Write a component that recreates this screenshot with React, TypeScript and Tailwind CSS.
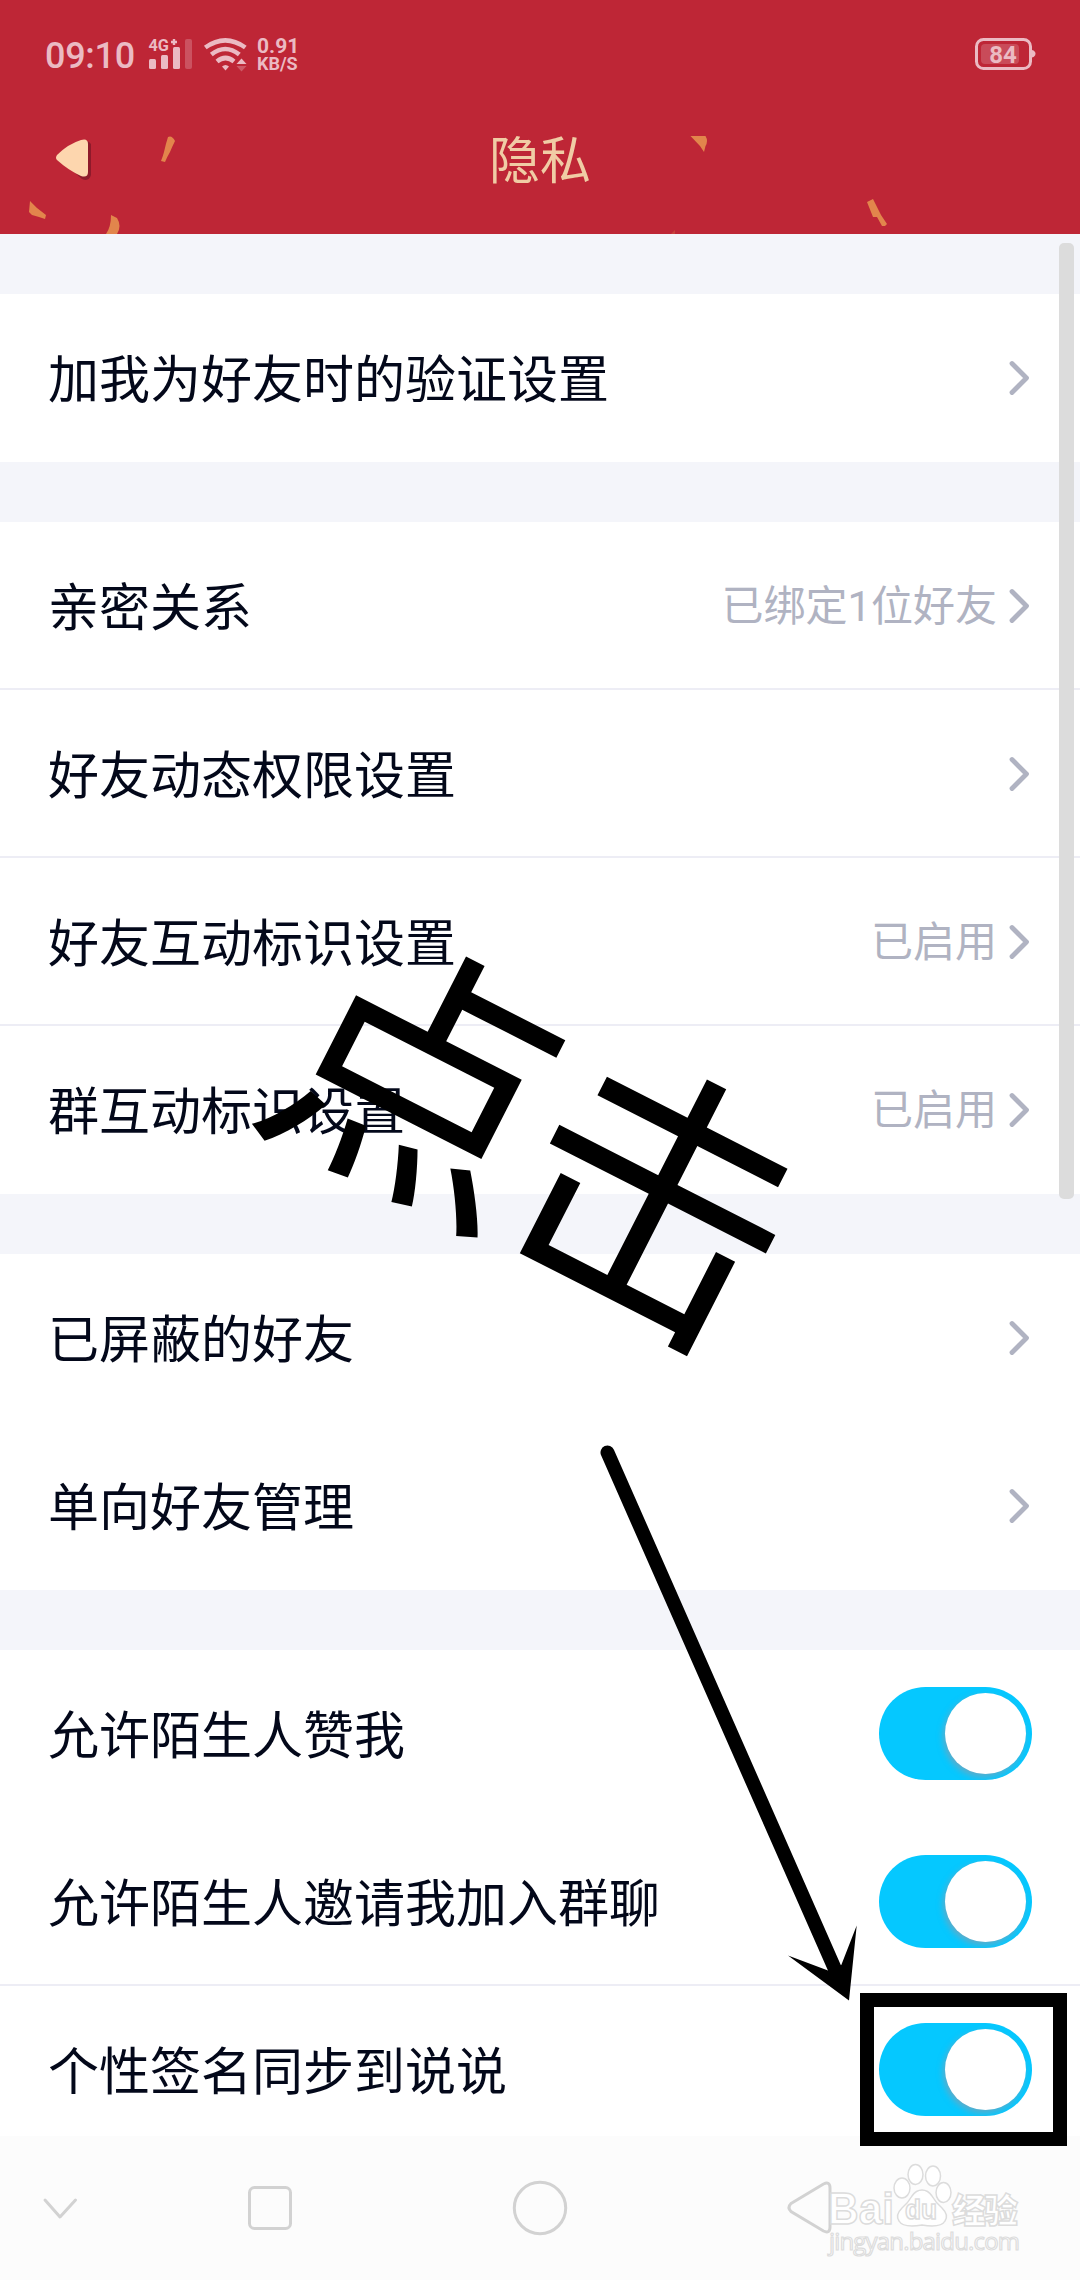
const SECTIONS = [
  [{ label: "加我为好友时的验证设置" }],
  [
    { label: "亲密关系", value: "已绑定1位好友", line: true },
    { label: "好友动态权限设置", line: true },
    { label: "好友互动标识设置", value: "已启用", line: true },
    { label: "群互动标识设置", value: "已启用" },
  ],
  [{ label: "已屏蔽的好友" }, { label: "单向好友管理" }],
  [
    { label: "允许陌生人赞我", toggle: true },
    { label: "允许陌生人邀请我加入群聊", toggle: true, line: true },
    { label: "个性签名同步到说说", toggle: true },
  ],
];

type RowProps = {
  label: string;
  value?: string;
  line?: boolean;
  toggle?: boolean;
};

function Toggle() {
  return (
    <div className="mb-[2px] flex h-[93px] w-[153px] shrink-0 items-center justify-end overflow-hidden rounded-full bg-[#05c8ff] pr-[6px]">
      <div className="size-[81px] rounded-full bg-white shadow-[-2px_3px_6px_rgba(130,160,180,0.75)]" />
    </div>
  );
}

function Chevron() {
  return (
    <svg className="ml-[10px] h-[40px] w-[24px] shrink-0" viewBox="0 0 24 40" fill="none">
      <path
        d="M5 5.5 19.5 20 5 34.5"
        stroke="#b0b3c2"
        strokeWidth="4.8"
        strokeLinecap="round"
        strokeLinejoin="round"
      />
    </svg>
  );
}

function Row({ label, value, line, toggle }: RowProps) {
  return (
    <div
      className={`flex h-[168px] shrink-0 items-center bg-white pl-12 ${toggle ? "pr-12" : "pr-[49px]"} ${
        line ? "shadow-[inset_0_-2px_0_#ededf5]" : ""
      }`}
    >
      <span className="flex-1 pb-[3px] text-[51px] leading-none text-[#03081a]">{label}</span>
      {value && (
        <span className="pt-px font-[Roboto,'Noto_Sans_CJK_SC',sans-serif] text-[42px] leading-none text-[#b0b3c2]">
          {value}
        </span>
      )}
      {toggle ? <Toggle /> : <Chevron />}
    </div>
  );
}

function StatusBar() {
  return (
    <div className="flex h-[108px] items-center justify-between pr-[44px] pl-[45px] font-[Roboto,sans-serif] text-[#ebbac3]">
      <div className="flex items-center">
        <span className="w-[91px] pt-[3px] text-[36px] leading-none font-medium tracking-[-0.3px]">09:10</span>
        <svg className="ml-[12px] h-[36px] w-[46px]" viewBox="148 36 46 36" fill="currentColor">
          <text x="148.5" y="51" fontSize="16.5" fontWeight="700" textLength="20.5" lengthAdjust="spacingAndGlyphs">
            4G
          </text>
          <path d="M171 42h6M174 39v6" stroke="currentColor" strokeWidth="2.4" />
          <rect x="149" y="59" width="7" height="10" rx="1.5" />
          <rect x="161" y="55" width="7" height="14" rx="1.5" />
          <rect x="173" y="47" width="7" height="22" rx="1.5" />
          <rect x="185" y="39" width="7" height="30" rx="2" opacity=".3" />
        </svg>
        <svg className="ml-[8px] h-[36px] w-[46px]" viewBox="202 36 46 36" fill="none">
          <g stroke="currentColor" strokeWidth="4.6">
            <path d="M205.3 47.5Q225.3 33.2 245.3 47.5" />
            <path d="M211.3 54.5Q225.3 43.5 239.3 54.5" />
            <path d="M217 61.5Q225.5 54.5 234 61.5" />
          </g>
          <path d="M222 66.5Q225.5 63.5 229 66.5L225.5 70.5Z" fill="currentColor" />
          <path d="M236.5 64 241.5 58.5 246.5 64Z" fill="currentColor" />
          <path d="M236.5 66 241.5 71.5 246.5 66Z" fill="currentColor" opacity=".35" />
        </svg>
        <div className="ml-[9px] flex flex-col pt-[2px] font-bold">
          <span className="text-[21px] leading-[17px]">0.91</span>
          <span className="text-[18px] leading-[17px]">KB/S</span>
        </div>
      </div>
      <svg className="h-[32px] w-[61px]" viewBox="0 0 61 32" fill="currentColor">
        <rect x="1.5" y="1.5" width="54" height="29" rx="7" fill="none" stroke="currentColor" strokeWidth="3" />
        <path d="M57 12q3.5 1 3.5 3.7T57 19.5Z" />
        <rect x="6" y="6" width="38" height="20" rx="4" opacity=".25" />
        <text x="28" y="25" textAnchor="middle" fontSize="24" fontWeight="700">
          84
        </text>
      </svg>
    </div>
  );
}

function Header() {
  return (
    <header className="relative h-[234px] shrink-0 bg-[#be2636]">
      <svg className="absolute inset-0 h-full w-full" viewBox="0 0 1080 234">
        <g fill="#e2854c">
          <path d="M168 137q4-2 7 4-3 6-5 11-3 5-5 10l-4-1q2-5 3-9 2-9 4-15Z" />
          <path d="m30 201 7 7 9 7-1 4-6-2-7-2-3-3Z" />
          <path d="m111 215 6 3q5 8 0 16h-11q5-7 5-19Z" />
          <path d="M690.5 136h15q3 5 0 10l-1.5 6-4-6Z" />
          <path d="m867 202 6-3 8 16 6 9-2 2-3 0-5-9-4 0Z" />
          <path d="m671 234 4-4v4Z" opacity=".3" />
        </g>
        <path d="M60 160 82 142q6-3 9 2v31q-2 7-9 4Z" fill="#8e1a2b" />
        <path d="M57 155q11-11 24-15 7-2 7 4v28q0 6-7 4-13-6-24-16-2-2 0-5Z" fill="#fdd6ae" />
      </svg>
      <StatusBar />
      <h1 className="relative pt-6 text-center text-[51px] leading-none text-[#f0cca5]">隐私</h1>
    </header>
  );
}

function Watermark() {
  return (
    <svg
      className="absolute top-[2150px] left-[820px] h-[120px] w-[220px] font-['Liberation_Sans','Noto_Sans_CJK_SC',sans-serif]"
      viewBox="820 2150 220 120"
      fill="#fff"
      stroke="#dcdcdc"
      strokeWidth="1.5"
    >
      <text x="828" y="2224" fontSize="45" fontWeight="700" textLength="66" lengthAdjust="spacingAndGlyphs">
        Bai
      </text>
      <ellipse cx="902" cy="2188" rx="8" ry="10" />
      <ellipse cx="915.5" cy="2174.5" rx="7.5" ry="10" />
      <ellipse cx="933" cy="2176" rx="7.5" ry="10" />
      <ellipse cx="943.5" cy="2192.5" rx="7.5" ry="10" />
      <path d="M922 2190q6 0 10 6 4 7 10 12 7 7 3 13-4 7-23 4-19 3-23-4-4-6 3-13 6-5 10-12 4-6 10-6Z" />
      <text x="905" y="2219" fontSize="27" fontWeight="700" textLength="32" lengthAdjust="spacingAndGlyphs">
        du
      </text>
      <text x="952" y="2223" fontSize="34" fontWeight="900" textLength="66">
        经验
      </text>
      <text x="829" y="2250" fontSize="24" textLength="191" className="font-['Open_Sans',sans-serif]" strokeWidth="1.2">
        jingyan.baidu.com
      </text>
    </svg>
  );
}

function NavBar() {
  return (
    <nav className="relative flex h-[144px] shrink-0 bg-[#fcfcfc]">
      <svg className="h-full w-full" viewBox="0 2136 1080 144" fill="none" stroke="#d2d2d2" strokeWidth="3">
        <path d="m45 2200 15 17 15.5-17" strokeLinecap="round" strokeLinejoin="round" />
        <rect x="249.5" y="2187.5" width="41" height="41" rx="5" />
        <circle cx="540" cy="2208" r="25.7" />
        <path d="M791 2203.5 823.5 2184q6.5-3 6.5 4v39q0 7-6.5 4L791 2211.5q-4-4 0-8Z" />
      </svg>
    </nav>
  );
}

// hand-drawn hints laid over the settings list
function Annotations() {
  return (
    <>
      <div className="absolute top-[981px] left-[261px] flex h-[280px] w-[560px] rotate-[27deg] items-center justify-center text-[278px] leading-none tracking-[-10px] whitespace-nowrap text-black">
        点击
      </div>
      <svg className="absolute top-[1420px] left-[560px] h-[600px] w-[320px]" viewBox="560 1420 320 600">
        <path d="M607.5 1452.5 838 1976" stroke="#000" strokeWidth="14" strokeLinecap="round" />
        <path d="M788 1955.5 828 1970.5 841.3 1965 856.7 1925.5 849 2000.5Z" />
      </svg>
      <div className="absolute top-[1993px] left-[860px] h-[153px] w-[207px] border-[14px] border-black" />
    </>
  );
}

export default function App() {
  return (
    <div className="relative flex h-[2280px] w-[1080px] flex-col overflow-hidden bg-white font-['Noto_Sans_CJK_SC',sans-serif]">
      <Header />
      <main className="flex min-h-0 flex-1 flex-col gap-[60px] overflow-hidden bg-[#f4f5fa] pt-[60px]">
        {SECTIONS.map((rows, i) => (
          <section key={i} className="flex shrink-0 flex-col">
            {rows.map((row) => (
              <Row key={row.label} {...row} />
            ))}
          </section>
        ))}
      </main>
      <NavBar />
      <div className="absolute top-[243px] left-[1059px] h-[956px] w-[15px] rounded-[5px] bg-[#dcdcdc]" />
      <Annotations />
      <Watermark />
    </div>
  );
}
